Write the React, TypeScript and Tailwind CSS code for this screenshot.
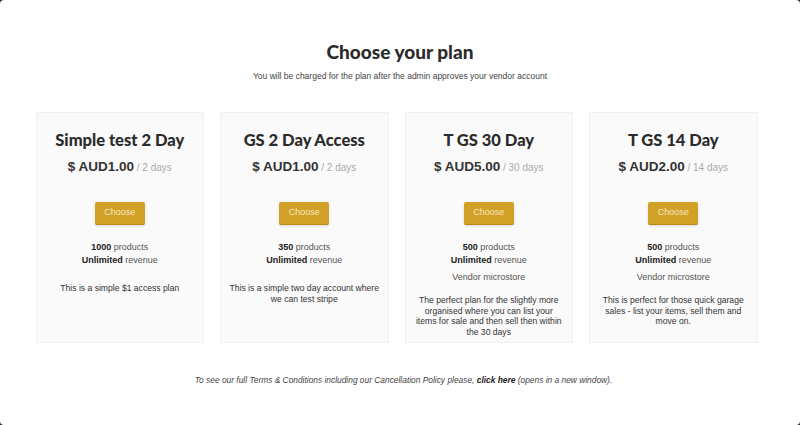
import React from "react";

interface Plan {
  name: string;
  price: string;
  period: string;
  products: string;
  microstore?: boolean;
  description: string;
}

const plans: Plan[] = [
  {
    name: "Simple test 2 Day",
    price: "$ AUD1.00",
    period: "2 days",
    products: "1000",
    description: "This is a simple $1 access plan",
  },
  {
    name: "GS 2 Day Access",
    price: "$ AUD1.00",
    period: "2 days",
    products: "350",
    description: "This is a simple two day account where we can test stripe",
  },
  {
    name: "T GS 30 Day",
    price: "$ AUD5.00",
    period: "30 days",
    products: "500",
    microstore: true,
    description:
      "The perfect plan for the slightly more organised where you can list your items for sale and then sell then within the 30 days",
  },
  {
    name: "T GS 14 Day",
    price: "$ AUD2.00",
    period: "14 days",
    products: "500",
    microstore: true,
    description:
      "This is perfect for those quick garage sales - list your items, sell them and move on.",
  },
];

const PlanCard: React.FC<{ plan: Plan }> = ({ plan }) => (
  <div className="flex flex-col items-center h-[231px] bg-[#fafafa] border border-[#f0f0f0] px-[8px] pt-[17px] text-center">
    <div className="font-['Lato',sans-serif] font-black text-[16.5px] leading-[20px] text-[#2b2b2b]">
      {plan.name}
    </div>
    <div className="mt-[4px] font-['Liberation_Sans',sans-serif] text-[#333]">
      <span className="font-bold text-[13.5px]">{plan.price}</span>
      <span className="text-[10px] text-[#aaa]"> / </span>
      <span className="text-[10px] text-[#aaa]">{plan.period}</span>
    </div>
    <button
      type="button"
      className="mt-[24px] w-[50px] h-[23px] rounded-[2px] bg-[#d1a026] border-b border-[#b8891a] text-[9px] text-[#f7e7c0] font-['Liberation_Sans',sans-serif] shadow-sm"
    >
      Choose
    </button>
    <div className="mt-[16px] font-['Liberation_Sans',sans-serif] text-[9px] leading-[13px] text-[#555]">
      <div>
        <span className="font-bold text-[#222]">{plan.products}</span> products
      </div>
      <div>
        <span className="font-bold text-[#222]">Unlimited</span> revenue
      </div>
      {plan.microstore && <div className="mt-[4px]">Vendor microstore</div>}
    </div>
    <div
      className={`${plan.microstore ? "mt-[11px]" : "mt-[16px]"} font-['Liberation_Sans',sans-serif] text-[8.6px] leading-[10.5px] text-[#333]`}
    >
      {plan.description}
    </div>
  </div>
);

export default function App() {
  return (
    <div className="w-[800px] h-[425px] bg-[#222]">
      <div className="w-full h-full bg-white rounded-[4px] flex flex-col items-center">
        <h1 className="mt-[40px] font-['Lato',sans-serif] font-black text-[19px] leading-[24px] text-[#2b2b2b]">
          Choose your plan
        </h1>
        <p className="mt-[6px] font-['Liberation_Sans',sans-serif] text-[8.5px] leading-[13px] text-[#444]">
          You will be charged for the plan after the admin approves your vendor account
        </p>
        <div className="mt-[29px] mr-[7px] w-[722px] grid grid-cols-4 gap-[16px]">
          {plans.map((p) => (
            <PlanCard key={p.name} plan={p} />
          ))}
        </div>
        <p className="mt-[31px] ml-[7px] font-['Liberation_Sans',sans-serif] italic text-[8.4px] text-[#444]">
          To see our full Terms &amp; Conditions including our Cancellation Policy please,{" "}
          <span className="font-bold text-[#222]">click here</span> (opens in a new window).
        </p>
      </div>
    </div>
  );
}
